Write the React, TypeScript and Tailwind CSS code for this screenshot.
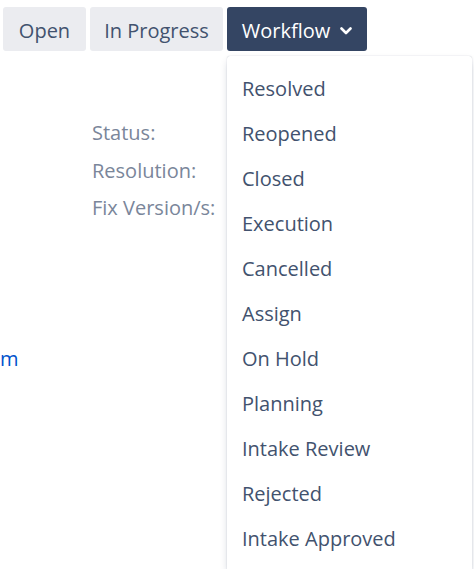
import React from "react";

const transitions = [
    { label: "Open", w: "w-[83px]" },
    { label: "In Progress", w: "w-[133px]" },
];

const workflowItems = [
    "Resolved",
    "Reopened",
    "Closed",
    "Execution",
    "Cancelled",
    "Assign",
    "On Hold",
    "Planning",
    "Intake Review",
    "Rejected",
    "Intake Approved",
];

const fields = ["Status:", "Resolution:", "Fix Version/s:"];

export default function App() {
    return (
        <div className="relative h-[569px] w-[474px] overflow-hidden bg-white font-['Open_Sans',sans-serif] text-[20px]">
            {/* Transition buttons */}
            <div className="flex gap-[4px] pl-[3px] pt-[7px]">
                {transitions.map((t) => (
                    <button key={t.label} className={`${t.w} h-[44px] rounded-[3px] bg-[#ebecf0] pt-[3px] text-[#42526e]`}>
                        {t.label}
                    </button>
                ))}
                <button className="flex h-[44px] w-[140px] items-center justify-center gap-[10px] rounded-[3px] bg-[#344563] pt-[3px] text-white">
                    Workflow
                    <svg width="12" height="8" viewBox="0 0 12 8" fill="none">
                        <path d="M1.5 1.5 6 6l4.5-4.5" stroke="white" strokeWidth="2.6" strokeLinecap="round" strokeLinejoin="round" />
                    </svg>
                </button>
            </div>

            {/* Issue details behind the menu */}
            <div className="pl-[92px] pt-[63px] leading-[37.5px] text-[#7a869a]">
                {fields.map((f) => (
                    <div key={f}>{f}</div>
                ))}
            </div>
            <div className="mt-[117px] leading-[30px] text-[#0052cc]">m</div>

            {/* Workflow dropdown */}
            <div className="absolute left-[227px] top-[56px] w-[245px] rounded-[3px] bg-white pt-[10px] pb-[10px] shadow-[0_4px_8px_-2px_rgba(9,30,66,0.25),0_0_1px_rgba(9,30,66,0.31)]">
                {workflowItems.map((item) => (
                    <div key={item} className="flex h-[45px] items-center px-[15px] text-[#42526e]">
                        {item}
                    </div>
                ))}
            </div>
        </div>
    );
}
